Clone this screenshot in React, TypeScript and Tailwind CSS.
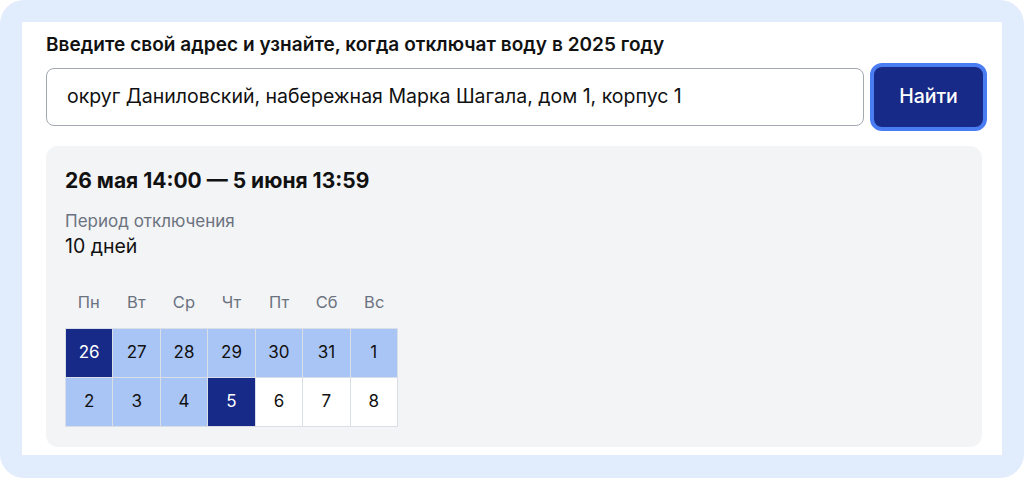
const days = ["Пн", "Вт", "Ср", "Чт", "Пт", "Сб", "Вс"];

interface Cell {
  day: number;
  kind: "edge" | "range" | "free";
}

const cells: Cell[] = [
  { day: 26, kind: "edge" },
  { day: 27, kind: "range" },
  { day: 28, kind: "range" },
  { day: 29, kind: "range" },
  { day: 30, kind: "range" },
  { day: 31, kind: "range" },
  { day: 1, kind: "range" },
  { day: 2, kind: "range" },
  { day: 3, kind: "range" },
  { day: 4, kind: "range" },
  { day: 5, kind: "edge" },
  { day: 6, kind: "free" },
  { day: 7, kind: "free" },
  { day: 8, kind: "free" },
];

const cellClass = (kind: Cell["kind"]) => {
  if (kind === "edge") return "bg-[#172a88] text-white";
  if (kind === "range") return "bg-[#a9c5f5] text-[#111]";
  return "bg-white text-[#111]";
};

const App = () => {
  return (
    <div className="w-[1024px] h-[478px] bg-white font-['Inter',sans-serif]">
      <div className="h-full rounded-[24px] bg-[#e1edfd] pt-[22px] pb-[23px] px-[22px]">
        <div className="h-full bg-white pl-[24px] pt-[11px]">
          <p className="text-[19px] leading-[24px] font-semibold tracking-[0.05px] text-[#111]">
            Введите свой адрес и узнайте, когда отключат воду в 2025 году
          </p>
          <div className="mt-[6px] flex items-center gap-[6px]">
            <div className="w-[818px] h-[58px] rounded-[8px] border border-[#a3a8b2] flex items-center px-[20px] text-[19.5px] text-[#111]">
              округ Даниловский, набережная Марка Шагала, дом 1, корпус 1
            </div>
            <button className="w-[117px] h-[68px] rounded-[12px] border-4 border-[#4a7cf2] bg-[#172a88] text-white text-[19.5px] font-medium">
              Найти
            </button>
          </div>
          <div className="mt-[15px] w-[936px] h-[301px] rounded-[12px] bg-[#f3f4f6] pl-[19px] pt-[21px]">
            <p className="text-[21px] leading-[28px] font-bold text-[#111]">
              26 мая 14:00 — 5 июня 13:59
            </p>
            <p className="mt-[15px] text-[17px] leading-[22px] text-[#6b7280]">
              Период отключения
            </p>
            <p className="mt-[2px] text-[19.5px] leading-[24px] text-[#111]">
              10 дней
            </p>
            <div className="mt-[33px] w-[333px] grid grid-cols-7 text-[16.5px] leading-[22px] text-[#6b7280] text-center">
              {days.map((d) => (
                <span key={d}>{d}</span>
              ))}
            </div>
            <div className="mt-[15px] w-[333px] grid grid-cols-7 gap-px p-px bg-[#d9dee7]">
              {cells.map((c, i) => (
                <div
                  key={i}
                  className={`h-[48px] flex items-center justify-center text-[17px] ${cellClass(c.kind)}`}
                >
                  {c.day}
                </div>
              ))}
            </div>
          </div>
        </div>
      </div>
    </div>
  );
};

export default App;
